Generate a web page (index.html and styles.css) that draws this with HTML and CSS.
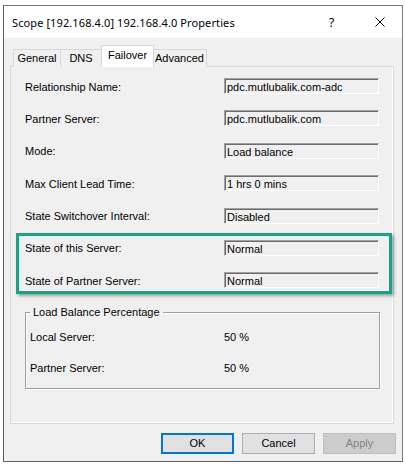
FILE: index.html
```html
<!DOCTYPE html>
<html>
<head>
<meta charset="utf-8">
<link rel="stylesheet" href="styles.css">
</head>
<body>
<div class="window">
  <div class="titlebar">
    <div class="title">Scope [192.168.4.0] 192.168.4.0 Properties</div>
    <div class="cap help">?</div>
    <div class="cap close">
      <svg width="10" height="10" viewBox="0 0 10 10"><path d="M0.5 0.5 L9.5 9.5 M9.5 0.5 L0.5 9.5" stroke="#000" stroke-width="1" fill="none"/></svg>
    </div>
  </div>
  <div class="body">
    <div class="tabs">
      <div class="tab t-general">General</div>
      <div class="tab t-dns">DNS</div>
      <div class="tab t-failover active">Failover</div>
      <div class="tab t-advanced">Advanced</div>
    </div>
    <div class="panel">
      <div class="rows">
        <div class="row"><div class="label">Relationship Name:</div><div class="field">pdc.mutlubalik.com-adc</div></div>
        <div class="row"><div class="label">Partner Server:</div><div class="field">pdc.mutlubalik.com</div></div>
        <div class="row"><div class="label">Mode:</div><div class="field">Load balance</div></div>
        <div class="row"><div class="label">Max Client Lead Time:</div><div class="field">1 hrs 0 mins</div></div>
        <div class="row"><div class="label">State Switchover Interval:</div><div class="field">Disabled</div></div>
        <div class="row"><div class="label">State of this Server:</div><div class="field">Normal</div></div>
        <div class="row"><div class="label">State of Partner Server:</div><div class="field">Normal</div></div>
      </div>
      <fieldset class="group">
        <legend>Load Balance Percentage</legend>
        <div class="grow"><div class="glabel">Local Server:</div><div class="gval">50 %</div></div>
        <div class="grow"><div class="glabel">Partner Server:</div><div class="gval">50 %</div></div>
      </fieldset>
      <div class="highlight"></div>
    </div>
    <div class="buttons">
      <div class="btn default">OK</div>
      <div class="btn">Cancel</div>
      <div class="btn disabled">Apply</div>
    </div>
  </div>
</div>
</body>
</html>
```
FILE: styles.css
```css
html, body {
  margin: 0;
  padding: 0;
  background: #ffffff;
}
body {
  font-family: "Liberation Sans", Arial, sans-serif;
  font-size: 11px;
  color: #000;
}
.window {
  margin: 5px 0 0 3px;
  width: 398px;
  height: 455px;
  border: 1px solid #7a7a7a;
  border-left-color: #5e5e5e;
  border-bottom-color: #5e5e5e;
  background: #f0f0f0;
  display: flex;
  flex-direction: column;
}
.titlebar {
  height: 32px;
  background: #ffffff;
  display: flex;
  align-items: center;
  flex: none;
}
.title {
  flex: 1;
  padding-left: 8px;
  font-family: "Noto Sans", "Open Sans", sans-serif;
  font-size: 11px;
  letter-spacing: 0.1px;
  padding-top: 1px;
}
.cap {
  width: 46px;
  height: 32px;
  display: flex;
  align-items: center;
  justify-content: center;
}
.help {
  font-family: "Noto Sans", sans-serif;
  font-size: 12px;
  padding-top: 1px;
  padding-right: 3px;
  box-sizing: border-box;
}
.close svg { display: block; margin-left: 1px; }
.body {
  flex: 1;
  display: flex;
  flex-direction: column;
  padding: 0 5px 0 6px;
}
.tabs {
  display: flex;
  align-items: flex-end;
  margin-top: 7px;
  padding-left: 3px;
  position: relative;
  z-index: 1;
  margin-bottom: -1px;
}
.tab {
  box-sizing: border-box;
  height: 18px;
  border: 1px solid #d9d9d9;
  border-bottom: none;
  background: #f0f0f0;
  text-align: center;
  line-height: 17px;
  margin-left: -1px;
}
.tab:first-child { margin-left: 0; }
.t-general { width: 48px; }
.t-dns { width: 42px; }
.t-failover { width: 53px; }
.t-advanced { width: 55px; }
.tab.active {
  height: 22px;
  background: #ffffff;
  line-height: 18px;
  position: relative;
  z-index: 2;
  margin-right: -1px;
}
.panel {
  position: relative;
  box-sizing: border-box;
  width: 384px;
  height: 358px;
  border: 1px solid #d9d9d9;
  box-shadow: inset -1px -1px 0 #ffffff;
  padding: 11px 13px 0 14px;
}
.rows {
  display: flex;
  flex-direction: column;
  gap: 16.4px;
}
.row {
  display: flex;
  align-items: center;
  height: 16px;
}
.label {
  width: 199px;
  padding-top: 1px;
}
.field {
  box-sizing: border-box;
  width: 155px;
  height: 16px;
  border: 1px solid;
  border-color: #a0a0a0 #ffffff #ffffff #a0a0a0;
  box-shadow: inset 1px 1px 0 #6d6d6d;
  padding: 2px 0 0 2px;
  line-height: 13px;
  white-space: nowrap;
}
.group {
  margin: 18px 0 0 0;
  width: 355px;
  box-sizing: border-box;
  border: 1px solid #a0a0a0;
  box-shadow: 1px 1px 0 #ffffff, inset 1px 1px 0 #ffffff;
  padding: 10px 4px 12px 4px;
  display: flex;
  flex-direction: column;
  gap: 15px;
}
.group legend {
  padding: 0 3px;
  line-height: 13px;
}
.grow {
  display: flex;
  height: 16px;
  align-items: center;
}
.glabel { width: 194px; }
.highlight {
  position: absolute;
  left: 5px;
  top: 166px;
  width: 376px;
  height: 61px;
  box-sizing: border-box;
  border: 3px solid #17a386;
  box-shadow: 2px 2px 3px rgba(0, 0, 0, 0.35);
  pointer-events: none;
}
.buttons {
  display: flex;
  justify-content: flex-end;
  gap: 8px;
  margin-top: 9px;
  padding-right: 1px;
}
.btn {
  box-sizing: border-box;
  width: 73px;
  height: 21px;
  border: 1px solid #adadad;
  background: #e1e1e1;
  text-align: center;
  line-height: 19px;
}
.btn.default {
  border: 2px solid #0078d7;
  line-height: 17px;
}
.btn.disabled {
  background: #cccccc;
  border-color: #bfbfbf;
  color: #838383;
}
```
